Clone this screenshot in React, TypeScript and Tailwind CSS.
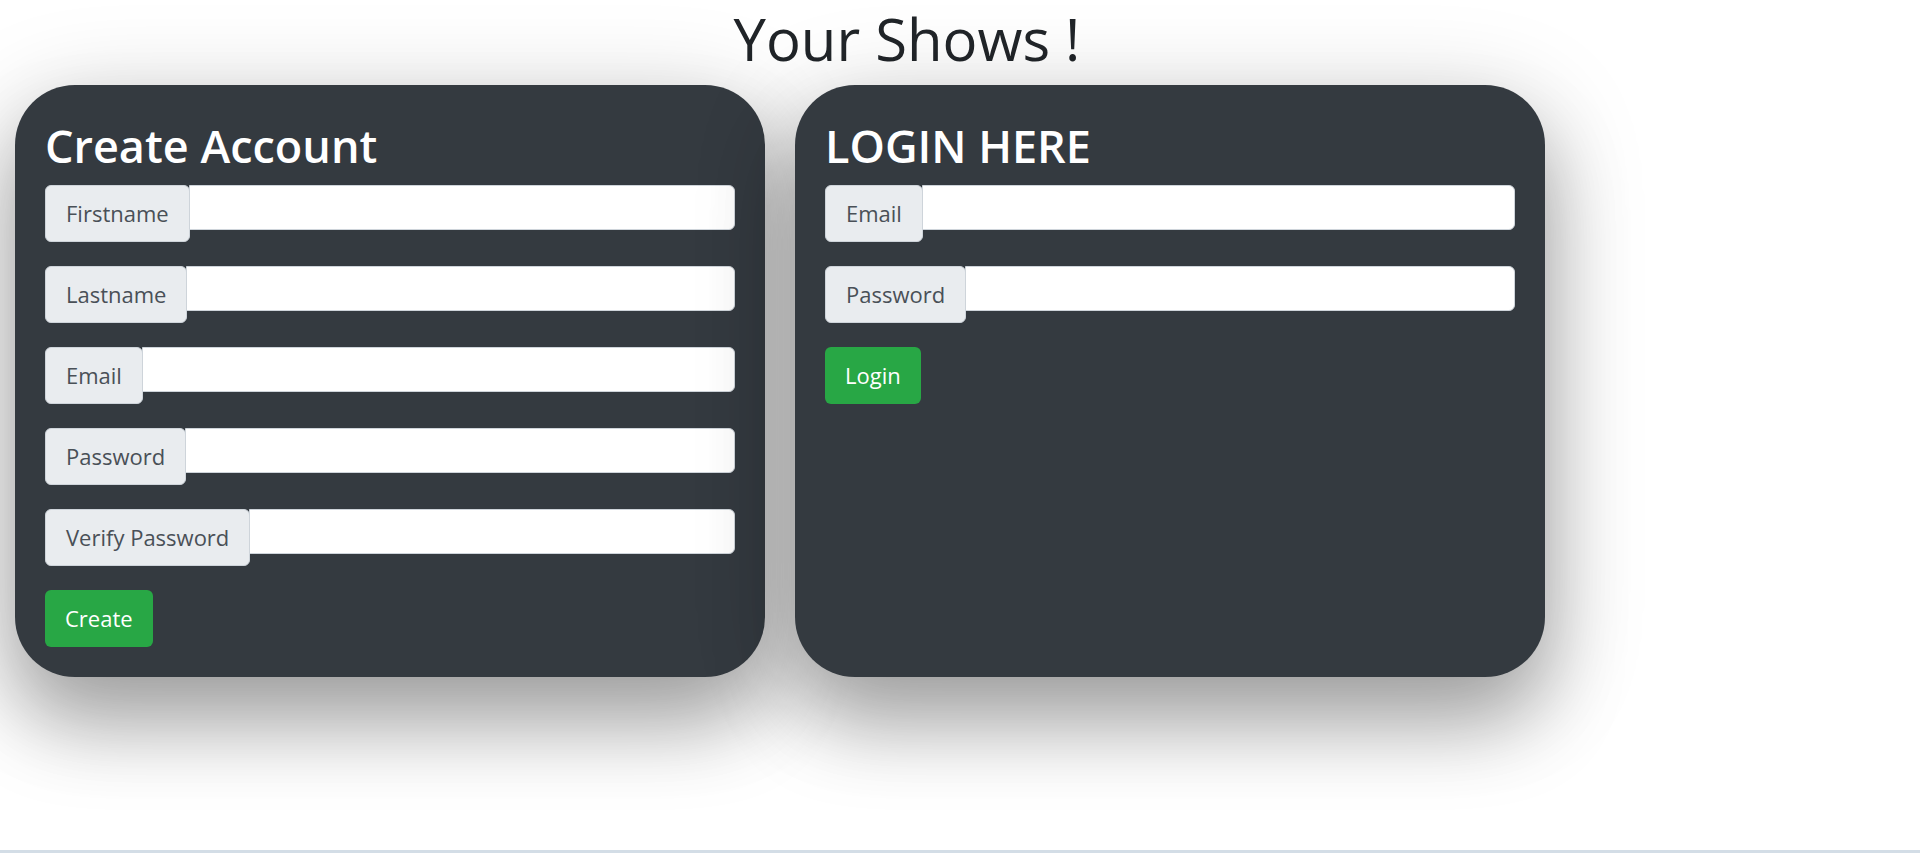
import React from 'react'

const font = { fontFamily: '"Open Sans", "Noto Sans", sans-serif' }

function Field({ label, type = 'text' }: { label: string; type?: string }) {
  return (
    <div className="flex items-start mb-[24px]">
      <span className="h-[57px] flex items-center px-5 text-[22px] text-[#495057] bg-[#e9ecef] border border-[#ced4da] rounded-md whitespace-nowrap">
        {label}
      </span>
      <input type={type} className="flex-1 h-[45px] bg-white border border-[#ced4da] rounded-r-md -ml-px outline-none px-3 text-[22px]" />
    </div>
  )
}

function Card({ title, fields, button }: { title: string; fields: { label: string; type?: string }[]; button: string }) {
  return (
    <div className="w-[750px] bg-[#343a40] rounded-[60px] px-[30px] pt-[33px] pb-[30px] shadow-[0_20px_100px_rgba(0,0,0,0.22),0_50px_80px_rgba(0,0,0,0.25)]">
      <h1 className="text-[45px] font-semibold leading-[55px] text-white mb-[12px]">{title}</h1>
      <form onSubmit={e => e.preventDefault()}>
        {fields.map(f => <Field key={f.label} label={f.label} type={f.type} />)}
        <button type="submit" className="h-[57px] px-5 bg-[#28a745] text-white text-[22px] rounded-md">{button}</button>
      </form>
    </div>
  )
}

export default function App() {
  return (
    <div style={font} className="h-[853px] flex flex-col bg-white overflow-hidden">
      <div className="flex-1">
        <div className="w-[1814px] text-center pt-[4px]">
          <h1 className="text-[58px] leading-[70px] text-[#212529]">Your Shows !</h1>
        </div>
        <div className="flex gap-[30px] pl-[15px] mt-[11px]">
          <Card
            title="Create Account"
            fields={[
              { label: 'Firstname' },
              { label: 'Lastname' },
              { label: 'Email', type: 'email' },
              { label: 'Password', type: 'password' },
              { label: 'Verify Password', type: 'password' },
            ]}
            button="Create"
          />
          <Card
            title="LOGIN HERE"
            fields={[
              { label: 'Email', type: 'email' },
              { label: 'Password', type: 'password' },
            ]}
            button="Login"
          />
        </div>
      </div>
      <div className="h-[3px] bg-[#d3dde6]" />
    </div>
  )
}
